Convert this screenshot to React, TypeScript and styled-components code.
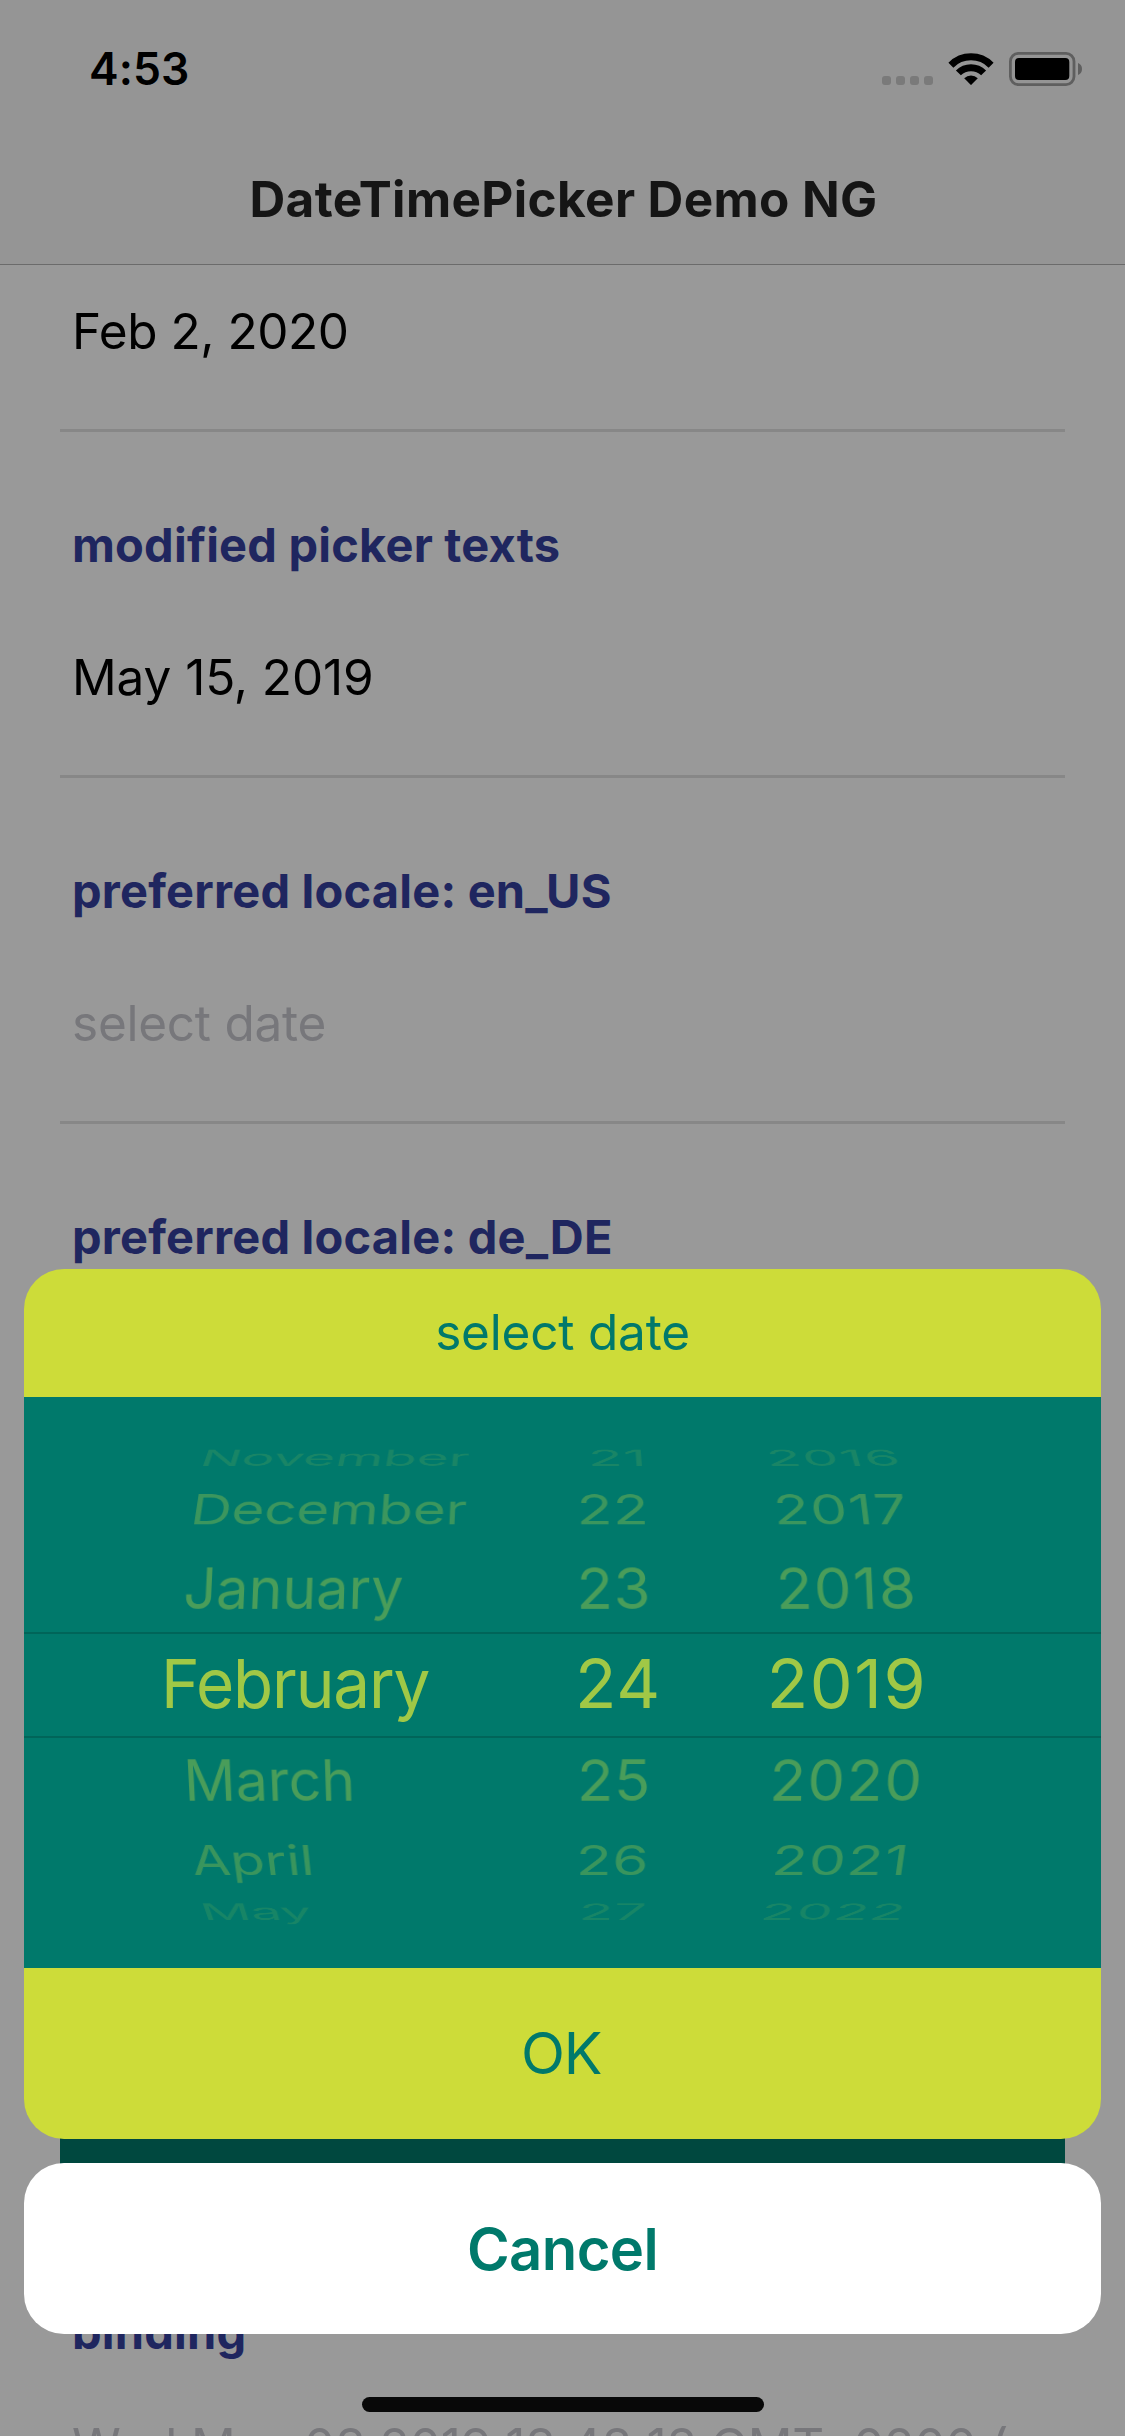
import React from "react";
import styled, { createGlobalStyle } from "styled-components";

const lime = "#cddc39";
const teal = "#00796b";

const GlobalStyle = createGlobalStyle`
  body {
    margin: 0;
    background: #999999;
  }
  * {
    box-sizing: border-box;
  }
`;

const Screen = styled.div`
  position: relative;
  width: 1125px;
  height: 2436px;
  overflow: hidden;
  display: flex;
  flex-direction: column;
  background: #999999;
  color: #000;
  font-family: Inter, "Liberation Sans", sans-serif;
  font-kerning: normal;
`;

const Header = styled.header`
  flex: none;
  height: 265px;
  background: #959595;
  border-bottom: 1px solid #6b6b6b;
`;

const StatusBar = styled.div`
  display: flex;
  align-items: flex-start;
  justify-content: space-between;
  height: 134px;
  padding: 39px 43px 0 89px;
`;

const Clock = styled.span`
  font-size: 44.5px;
  font-weight: 600;
  line-height: 60px;
  letter-spacing: 0.1px;
`;

const StatusIcons = styled.div`
  display: flex;
  align-items: flex-start;
  gap: 15px;
  padding-top: 13px;
`;

const Dots = styled.div`
  display: flex;
  gap: 5px;
  padding-top: 24px;
`;

const Dot = styled.i`
  width: 9px;
  height: 9px;
  border-radius: 3px;
  background: #7a7a7a;
`;

const NavTitle = styled.h1`
  margin: 0;
  padding: 35px 0 0 2px;
  text-align: center;
  font-size: 49.5px;
  font-weight: 700;
  line-height: 60px;
  letter-spacing: 0.38px;
  color: #151515;
`;

const Content = styled.main`
  flex: none;
  display: flex;
  flex-direction: column;
  padding: 0 60px;
`;

const Section = styled.section<{ $top?: number }>`
  display: flex;
  flex-direction: column;
  padding: ${(p) => p.$top ?? 83}px 12px 68px;
  border-bottom: 3px solid #878787;
`;

const Label = styled.h2<{ $gap?: number }>`
  margin: 0 0 ${(p) => p.$gap ?? 72}px;
  font-size: 47px;
  font-weight: 700;
  line-height: 60px;
  letter-spacing: 0.2px;
  color: #1f265f;
  white-space: nowrap;
`;

const Value = styled.div<{ $muted?: boolean; $spacing?: number }>`
  height: 60px;
  font-size: 49.5px;
  line-height: 60px;
  letter-spacing: ${(p) => p.$spacing ?? 0}px;
  color: ${(p) => (p.$muted ? "#77777b" : "#000")};
  white-space: nowrap;
`;

const WideButton = styled.div`
  height: 150px;
  margin-top: 570px;
  background: #00483f;
`;

const Sheet = styled.div`
  position: absolute;
  left: 24px;
  top: 1269px;
  width: 1077px;
  display: flex;
  flex-direction: column;
  gap: 24px;
`;

const PickerCard = styled.div`
  display: flex;
  flex-direction: column;
  border-radius: 40px;
  overflow: hidden;
  background: ${lime};
`;

const SheetTitle = styled.div`
  height: 128px;
  line-height: 126px;
  text-align: center;
  font-size: 49.5px;
  letter-spacing: -0.2px;
  color: ${teal};
`;

const Wheel = styled.div`
  height: 571px;
  padding: 46px 0;
  display: flex;
  flex-direction: column;
  color: ${lime};
  background: ${teal};
`;

const WheelRow = styled.div<{
  $height: number;
  $tilt: number;
  $depth: number;
  $opacity: number;
}>`
  flex: none;
  display: grid;
  grid-template-columns: 298px 174px 395px;
  padding-left: 156px;
  height: ${(p) => p.$height}px;
  line-height: ${(p) => p.$height - 1}px;
  font-size: 60px;
  white-space: nowrap;
  opacity: ${(p) => p.$opacity};
  transform: perspective(2400px) translateZ(${(p) => -p.$depth}px)
    rotateX(${(p) => p.$tilt}deg);
`;

const SelectedRow = styled.div`
  flex: none;
  display: grid;
  grid-template-columns: 300px 200px 372px;
  padding-left: 137px;
  height: 106px;
  line-height: 99px;
  border-top: 2px solid #006559;
  border-bottom: 2px solid #006559;
  font-size: 68px;
  white-space: nowrap;
  color: #a0c846;
`;

const Month = styled.span<{ $stretch?: number; $spacing?: number }>`
  transform: scaleX(${(p) => p.$stretch ?? 0.965});
  transform-origin: left center;
  letter-spacing: ${(p) => p.$spacing ?? 0}px;
`;

const Day = styled.span`
  text-align: right;
  letter-spacing: 0.8px;
`;

const Year = styled.span`
  text-align: center;
  letter-spacing: 1.6px;
`;

const OkButton = styled.div`
  height: 171px;
  padding-right: 3px;
  line-height: 171px;
  text-align: center;
  font-size: 57.5px;
  letter-spacing: -1.2px;
  color: ${teal};
`;

const CancelButton = styled.div`
  height: 171px;
  line-height: 172px;
  border-radius: 40px;
  text-align: center;
  font-size: 58px;
  font-weight: 600;
  letter-spacing: -0.6px;
  color: ${teal};
  background: #fff;
`;

const HomeIndicator = styled.div`
  position: absolute;
  left: 362px;
  top: 2397px;
  width: 402px;
  height: 15px;
  border-radius: 8px;
  background: #080808;
`;

type Row = {
  month: string;
  day: string;
  year: string;
  height: number;
  tilt: number;
  depth: number;
  opacity: number;
};

const before: Row[] = [
  { month: "November", day: "21", year: "2016", height: 30, tilt: 67, depth: 140, opacity: 0.12 },
  { month: "December", day: "22", year: "2017", height: 73, tilt: 45, depth: 74, opacity: 0.29 },
  { month: "January", day: "23", year: "2018", height: 86, tilt: 18, depth: 24, opacity: 0.36 },
];

const after: Row[] = [
  { month: "March", day: "25", year: "2020", height: 86, tilt: -18, depth: 24, opacity: 0.36 },
  { month: "April", day: "26", year: "2021", height: 73, tilt: -45, depth: 74, opacity: 0.28 },
  { month: "May", day: "27", year: "2022", height: 30, tilt: -67, depth: 140, opacity: 0.11 },
];

function Rows({ rows }: { rows: Row[] }) {
  return (
    <>
      {rows.map((r) => (
        <WheelRow
          key={r.month}
          $height={r.height}
          $tilt={r.tilt}
          $depth={r.depth}
          $opacity={r.opacity}
        >
          <Month>{r.month}</Month>
          <Day>{r.day}</Day>
          <Year>{r.year}</Year>
        </WheelRow>
      ))}
    </>
  );
}

function WifiIcon() {
  return (
    <svg width="46" height="34" viewBox="0 0 46 34">
      <g fill="none" stroke="#000" strokeWidth="7">
        <path d="M2.9 13.2A28.4 28.4 0 0 1 43.1 13.2" />
        <path d="M10.4 20.9A17.8 17.8 0 0 1 35.6 20.9" />
      </g>
      <path d="M16.2 26.2A10 10 0 0 1 29.8 26.2L23.6 32.6Q23 33.2 22.4 32.6Z" />
    </svg>
  );
}

function BatteryIcon() {
  return (
    <svg width="73" height="34" viewBox="0 0 73 34">
      <rect x="1.4" y="1.4" width="63.6" height="31.2" rx="8" fill="none" stroke="#5f5f5f" strokeWidth="2.8" />
      <rect x="6" y="6" width="54.3" height="22" rx="4" />
      <path d="M69 11Q73 12.5 73 17T69 23Z" fill="#5f5f5f" />
    </svg>
  );
}

export default function App() {
  return (
    <Screen>
      <GlobalStyle />
      <Header>
        <StatusBar>
          <Clock>4:53</Clock>
          <StatusIcons>
            <Dots>
              <Dot />
              <Dot />
              <Dot />
              <Dot />
            </Dots>
            <WifiIcon />
            <BatteryIcon />
          </StatusIcons>
        </StatusBar>
        <NavTitle>DateTimePicker Demo NG</NavTitle>
      </Header>

      <Content>
        <Section $top={36}>
          <Value $spacing={-0.45}>Feb 2, 2020</Value>
        </Section>
        <Section>
          <Label>modified picker texts</Label>
          <Value $spacing={-0.1}>May 15, 2019</Value>
        </Section>
        <Section>
          <Label>preferred locale: en_US</Label>
          <Value $muted $spacing={-0.25}>
            select date
          </Value>
        </Section>
        <Section>
          <Label>preferred locale: de_DE</Label>
          <Value />
        </Section>
        <WideButton />
        <Section $top={112}>
          <Label $gap={54}>binding</Label>
          <Value $muted $spacing={-0.1}>
            Wed May 08 2019 18:48:18 GMT+0200 (
          </Value>
        </Section>
      </Content>

      <Sheet>
        <PickerCard>
          <SheetTitle>select date</SheetTitle>
          <Wheel>
            <Rows rows={before} />
            <SelectedRow>
              <Month $stretch={0.965} $spacing={-1.2}>
                February
              </Month>
              <Day>24</Day>
              <Year>2019</Year>
            </SelectedRow>
            <Rows rows={after} />
          </Wheel>
          <OkButton>OK</OkButton>
        </PickerCard>
        <CancelButton>Cancel</CancelButton>
      </Sheet>
      <HomeIndicator />
    </Screen>
  );
}
